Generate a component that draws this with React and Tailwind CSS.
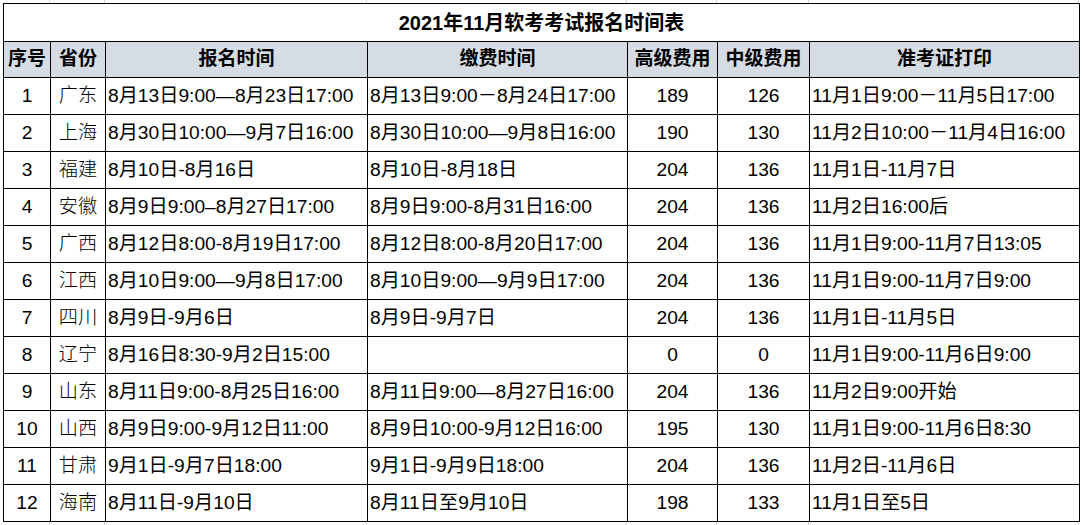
const cols = [47, 55, 262, 260, 90, 92, 270];

const rows = [
  ["1", "广东", "8月13日9:00—8月23日17:00", "8月13日9:00－8月24日17:00", "189", "126", "11月1日9:00－11月5日17:00"],
  ["2", "上海", "8月30日10:00—9月7日16:00", "8月30日10:00—9月8日16:00", "190", "130", "11月2日10:00－11月4日16:00"],
  ["3", "福建", "8月10日-8月16日", "8月10日-8月18日", "204", "136", "11月1日-11月7日"],
  ["4", "安徽", "8月9日9:00–8月27日17:00", "8月9日9:00-8月31日16:00", "204", "136", "11月2日16:00后"],
  ["5", "广西", "8月12日8:00-8月19日17:00", "8月12日8:00-8月20日17:00", "204", "136", "11月1日9:00-11月7日13:05"],
  ["6", "江西", "8月10日9:00—9月8日17:00", "8月10日9:00—9月9日17:00", "204", "136", "11月1日9:00-11月7日9:00"],
  ["7", "四川", "8月9日-9月6日", "8月9日-9月7日", "204", "136", "11月1日-11月5日"],
  ["8", "辽宁", "8月16日8:30-9月2日15:00", "", "0", "0", "11月1日9:00-11月6日9:00"],
  ["9", "山东", "8月11日9:00-8月25日16:00", "8月11日9:00—8月27日16:00", "204", "136", "11月2日9:00开始"],
  ["10", "山西", "8月9日9:00-9月12日11:00", "8月9日10:00-9月12日16:00", "195", "130", "11月1日9:00-11月6日8:30"],
  ["11", "甘肃", "9月1日-9月7日18:00", "9月1日-9月9日18:00", "204", "136", "11月2日-11月6日"],
  ["12", "海南", "8月11日-9月10日", "8月11日至9月10日", "198", "133", "11月1日至5日"],
];

const headers = ["序号", "省份", "报名时间", "缴费时间", "高级费用", "中级费用", "准考证打印"];
const align = ["text-center", "text-center", "text-left", "text-left", "text-center", "text-center", "text-left"];

function GridStrip({ h }) {
  return (
    <div className={`flex ${h}`}>
      <div className="w-[3px] shrink-0" />
      {cols.map((w, i) => (
        <div key={i} className="shrink-0 border-r border-[#d9d9d9]" style={{ width: w }} />
      ))}
    </div>
  );
}

export default function App() {
  return (
    <div className="w-[1083px] h-[525px] overflow-hidden bg-white font-['Liberation_Sans','Noto_Sans_CJK_SC',sans-serif] text-black">
      <GridStrip h="h-[3px]" />
      <div className="pl-[3px]">
        <table className="table-fixed border-collapse w-[1077px]">
          <colgroup>
            {cols.map((w, i) => (
              <col key={i} style={{ width: w }} />
            ))}
          </colgroup>
          <tbody>
            <tr className="h-[38px]">
              <td colSpan={7} className="border border-black text-center text-[20px] font-bold">
                2021年11月软考考试报名时间表
              </td>
            </tr>
            <tr className="h-[36px] bg-[#d6dce4]">
              {headers.map((t) => (
                <td key={t} className="border border-black text-center text-[19px] font-bold px-0 whitespace-nowrap">
                  {t}
                </td>
              ))}
            </tr>
            {rows.map((r) => (
              <tr key={r[0]} className="h-[37px]">
                {r.map((c, i) => (
                  <td
                    key={i}
                    className={`border border-black text-[19.2px] leading-none px-[2px] whitespace-nowrap ${align[i]} ${i === 1 ? "font-light" : ""}`}
                  >
                    {c}
                  </td>
                ))}
              </tr>
            ))}
          </tbody>
        </table>
      </div>
      <GridStrip h="h-[4px]" />
    </div>
  );
}
